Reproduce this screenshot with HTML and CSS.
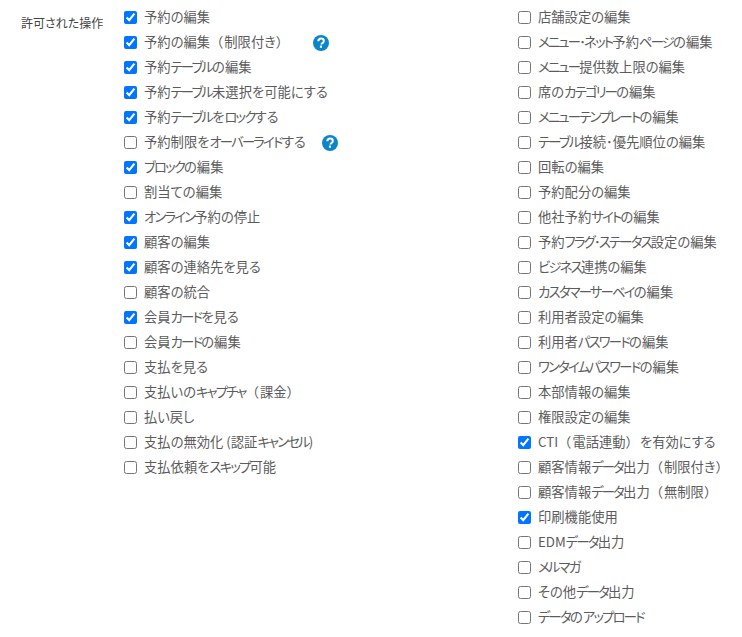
FILE: index.html
```html
<!DOCTYPE html>
<html lang="ja">
<head>
<meta charset="utf-8">
<title>許可された操作</title>
<link rel="stylesheet" href="styles.css">
</head>
<body>
<div class="field">
  <div class="field-label">許可された操作</div>
  <div class="col col-left">
    <label class="row"><input type="checkbox" checked><span class="t">予約の編集</span></label>
    <label class="row"><input type="checkbox" checked><span class="t">予約の編集<b>（</b>制限付き<b>）</b></span><svg class="help help-a" viewBox="0 0 16 16"><circle cx="8" cy="8" r="8" fill="#0a86c8"/><path d="M5.3 6.2C5.4 4.6 6.5 3.6 8.1 3.6c1.6 0 2.7 1 2.7 2.3 0 1.1-.6 1.7-1.4 2.2-.7.5-.9.7-.9 1.4" fill="none" stroke="#fff" stroke-width="2"/><rect x="6.9" y="10.6" width="2.1" height="2.1" fill="#fff"/></svg></label>
    <label class="row"><input type="checkbox" checked><span class="t">予約<i>テーブル</i>の編集</span></label>
    <label class="row"><input type="checkbox" checked><span class="t">予約<i>テーブル</i>未選択を可能にする</span></label>
    <label class="row"><input type="checkbox" checked><span class="t">予約<i>テーブル</i>を<i>ロック</i>する</span></label>
    <label class="row"><input type="checkbox"><span class="t">予約制限を<i>オーバーライド</i>する</span><svg class="help help-b" viewBox="0 0 16 16"><circle cx="8" cy="8" r="8" fill="#0a86c8"/><path d="M5.3 6.2C5.4 4.6 6.5 3.6 8.1 3.6c1.6 0 2.7 1 2.7 2.3 0 1.1-.6 1.7-1.4 2.2-.7.5-.9.7-.9 1.4" fill="none" stroke="#fff" stroke-width="2"/><rect x="6.9" y="10.6" width="2.1" height="2.1" fill="#fff"/></svg></label>
    <label class="row"><input type="checkbox" checked><span class="t"><i>ブロック</i>の編集</span></label>
    <label class="row"><input type="checkbox"><span class="t">割当ての編集</span></label>
    <label class="row"><input type="checkbox" checked><span class="t"><i>オンライン</i>予約の停止</span></label>
    <label class="row"><input type="checkbox" checked><span class="t">顧客の編集</span></label>
    <label class="row"><input type="checkbox" checked><span class="t">顧客の連絡先を見る</span></label>
    <label class="row"><input type="checkbox"><span class="t">顧客の統合</span></label>
    <label class="row"><input type="checkbox" checked><span class="t">会員<i>カード</i>を見る</span></label>
    <label class="row"><input type="checkbox"><span class="t">会員<i>カード</i>の編集</span></label>
    <label class="row"><input type="checkbox"><span class="t">支払を見る</span></label>
    <label class="row"><input type="checkbox"><span class="t">支払いの<i>キャプチャ</i><b>（</b>課金<b>）</b></span></label>
    <label class="row"><input type="checkbox"><span class="t">払い戻し</span></label>
    <label class="row"><input type="checkbox"><span class="t">支払の無効化 (認証<i>キャンセル</i>)</span></label>
    <label class="row"><input type="checkbox"><span class="t">支払依頼を<i>スキップ</i>可能</span></label>
  </div>
  <div class="col col-right">
    <label class="row"><input type="checkbox"><span class="t">店舗設定の編集</span></label>
    <label class="row"><input type="checkbox"><span class="t"><i>メニュー･ネット</i>予約<i>ページ</i>の編集</span></label>
    <label class="row"><input type="checkbox"><span class="t"><i>メニュー</i>提供数上限の編集</span></label>
    <label class="row"><input type="checkbox"><span class="t">席の<i>カテゴリー</i>の編集</span></label>
    <label class="row"><input type="checkbox"><span class="t"><i>メニューテンプレート</i>の編集</span></label>
    <label class="row"><input type="checkbox"><span class="t"><i>テーブル</i>接続･優先順位の編集</span></label>
    <label class="row"><input type="checkbox"><span class="t">回転の編集</span></label>
    <label class="row"><input type="checkbox"><span class="t">予約配分の編集</span></label>
    <label class="row"><input type="checkbox"><span class="t">他社予約<i>サイト</i>の編集</span></label>
    <label class="row"><input type="checkbox"><span class="t">予約<i>フラグ･ステータス</i>設定の編集</span></label>
    <label class="row"><input type="checkbox"><span class="t"><i>ビジネス</i>連携の編集</span></label>
    <label class="row"><input type="checkbox"><span class="t"><i>カスタマーサーベイ</i>の編集</span></label>
    <label class="row"><input type="checkbox"><span class="t">利用者設定の編集</span></label>
    <label class="row"><input type="checkbox"><span class="t">利用者<i>パスワード</i>の編集</span></label>
    <label class="row"><input type="checkbox"><span class="t"><i>ワンタイムパスワード</i>の編集</span></label>
    <label class="row"><input type="checkbox"><span class="t">本部情報の編集</span></label>
    <label class="row"><input type="checkbox"><span class="t">権限設定の編集</span></label>
    <label class="row"><input type="checkbox" checked><span class="t">CTI<b>（</b>電話連動<b>）</b>を有効にする</span></label>
    <label class="row"><input type="checkbox"><span class="t">顧客情報<i>データ</i>出力<b>（</b>制限付き<b>）</b></span></label>
    <label class="row"><input type="checkbox"><span class="t">顧客情報<i>データ</i>出力<b>（</b>無制限<b>）</b></span></label>
    <label class="row"><input type="checkbox" checked><span class="t">印刷機能使用</span></label>
    <label class="row"><input type="checkbox"><span class="t">EDM<i>データ</i>出力</span></label>
    <label class="row"><input type="checkbox"><span class="t"><i>メルマガ</i></span></label>
    <label class="row"><input type="checkbox"><span class="t">その他<i>データ</i>出力</span></label>
    <label class="row"><input type="checkbox"><span class="t"><i>データ</i>の<i>アップロード</i></span></label>
  </div>
</div>
</body>
</html>
```
FILE: styles.css
```css
html, body {
  margin: 0;
  padding: 0;
  background: #fff;
}
body {
  font-family: "Noto Sans CJK JP", "Noto Sans", sans-serif;
  font-size: 13.3px;
  color: #5c5c5c;
  font-feature-settings: "palt";
}
.field {
  display: flex;
  align-items: flex-start;
  padding-top: 5px;
}
.field-label {
  width: 124px;
  box-sizing: border-box;
  padding-left: 21px;
  padding-top: 5px;
  line-height: 25px;
  font-size: 12px;
  color: #444;
}
.col {
  display: flex;
  flex-direction: column;
}
.col-left {
  width: 394px;
}
.row {
  display: flex;
  align-items: center;
  height: 25px;
  white-space: nowrap;
}
.row input {
  width: 13px;
  height: 13px;
  margin: 0;
  flex: none;
}
.t {
  margin-left: 7px;
  position: relative;
  top: -1px;
}
.t i {
  font-style: normal;
  letter-spacing: -1.75px;
}
.t b {
  font-weight: 400;
  font-feature-settings: normal;
  letter-spacing: 1px;
}
.help {
  width: 16px;
  height: 16px;
  flex: none;
}
.help-a {
  margin-left: 23px;
}
.help-b {
  margin-left: 16px;
}
```
